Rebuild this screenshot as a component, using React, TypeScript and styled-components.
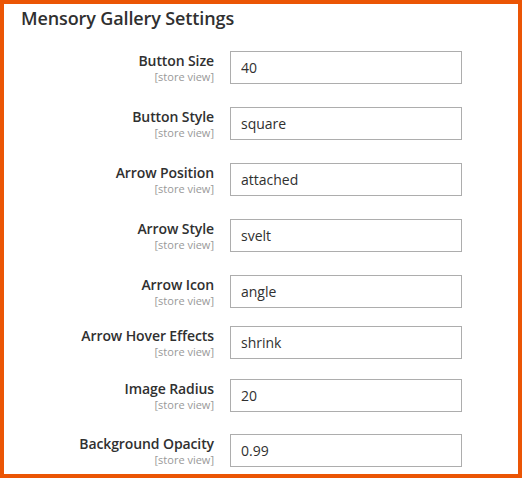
import React from 'react';
import styled, { createGlobalStyle } from 'styled-components';

const GlobalStyle = createGlobalStyle`
  html, body {
    margin: 0;
    padding: 0;
    background: #ffffff;
  }
  body {
    font-family: 'Open Sans', 'Noto Sans', Arial, sans-serif;
  }
`;

interface Field {
  label: string;
  value: string;
  // space above the row, the rows are not evenly spaced in the panel
  spaceAbove: number;
}

const FIELDS: Field[] = [
  { label: 'Button Size', value: '40', spaceAbove: 21 },
  { label: 'Button Style', value: 'square', spaceAbove: 23 },
  { label: 'Arrow Position', value: 'attached', spaceAbove: 23 },
  { label: 'Arrow Style', value: 'svelt', spaceAbove: 23 },
  { label: 'Arrow Icon', value: 'angle', spaceAbove: 23 },
  { label: 'Arrow Hover Effects', value: 'shrink', spaceAbove: 18 },
  { label: 'Image Radius', value: '20', spaceAbove: 20 },
  { label: 'Background Opacity', value: '0.99', spaceAbove: 22 },
];

const Frame = styled.div`
  box-sizing: border-box;
  width: 522px;
  height: 478px;
  border: 4px solid #eb5505;
  background: #ffffff;
  padding-top: 2px;
  overflow: hidden;
  display: flex;
  flex-direction: column;
`;

const Legend = styled.h2`
  margin: 0;
  padding-left: 17px;
  font-size: 18px;
  line-height: 24px;
  font-weight: 600;
  letter-spacing: -0.12px;
  color: #303030;
`;

const Row = styled.div<{ $spaceAbove: number }>`
  display: grid;
  grid-template-columns: 210px 232px;
  column-gap: 16px;
  margin-top: ${({ $spaceAbove }) => `${$spaceAbove}px`};
`;

const LabelCell = styled.div`
  display: flex;
  flex-direction: column;
  align-items: flex-end;
  padding-top: 1px;
  text-align: right;
`;

const Label = styled.label`
  font-size: 14px;
  line-height: 18px;
  font-weight: 600;
  letter-spacing: -0.1px;
  color: #303030;
`;

const Scope = styled.span`
  font-size: 11px;
  line-height: 13px;
  color: #999999;
`;

const TextInput = styled.input`
  box-sizing: border-box;
  width: 232px;
  height: 33px;
  margin: 0;
  padding: 0 10px;
  border: 1px solid #adadad;
  border-radius: 0;
  background: #ffffff;
  font-family: inherit;
  font-size: 14px;
  color: #303030;
  outline: none;
`;

const App: React.FC = () => (
  <>
    <GlobalStyle />
    <Frame>
      <Legend>Mensory Gallery Settings</Legend>
      {FIELDS.map((field) => (
        <Row key={field.label} $spaceAbove={field.spaceAbove}>
          <LabelCell>
            <Label>{field.label}</Label>
            <Scope>[store view]</Scope>
          </LabelCell>
          <TextInput type='text' defaultValue={field.value} readOnly />
        </Row>
      ))}
    </Frame>
  </>
);

export default App;
